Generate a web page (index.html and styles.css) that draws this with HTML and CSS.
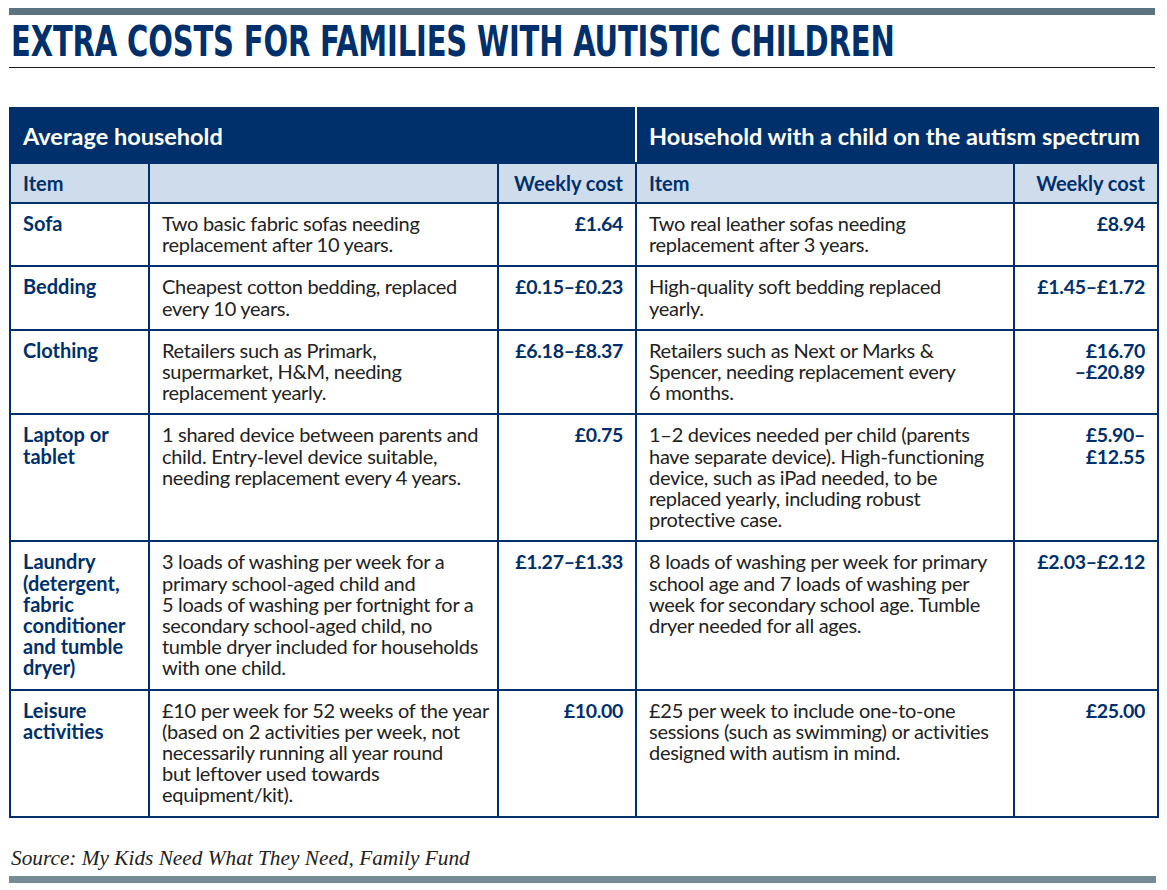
FILE: index.html
```html
<!DOCTYPE html>
<html lang="en">
<head>
<meta charset="utf-8">
<title>Extra costs for families with autistic children</title>
<link rel="stylesheet" href="styles.css">
</head>
<body>
<div class="page">
  <div class="topbar"></div>
  <h1 class="title"><span class="title-text">EXTRA COSTS FOR FAMILIES WITH AUTISTIC CHILDREN</span></h1>
  <div class="rule"></div>
  <table class="costs">
    <colgroup>
      <col class="c-item">
      <col class="c-desc1">
      <col class="c-cost">
      <col class="c-desc2">
      <col class="c-cost2">
    </colgroup>
    <thead>
      <tr class="group">
        <th colspan="3" class="group-left">Average household</th>
        <th colspan="2" class="group-right">Household with a child on the autism spectrum</th>
      </tr>
      <tr class="sub">
        <th>Item</th>
        <th></th>
        <th class="num">Weekly cost</th>
        <th>Item</th>
        <th class="num">Weekly cost</th>
      </tr>
    </thead>
    <tbody>
      <tr>
        <td class="item">Sofa</td>
        <td class="desc">Two basic fabric sofas needing<br>replacement after 10 years.</td>
        <td class="cost">£1.64</td>
        <td class="desc">Two real leather sofas needing<br>replacement after 3 years.</td>
        <td class="cost">£8.94</td>
      </tr>
      <tr>
        <td class="item">Bedding</td>
        <td class="desc">Cheapest cotton bedding, replaced<br>every 10 years.</td>
        <td class="cost">£0.15–£0.23</td>
        <td class="desc">High-quality soft bedding replaced<br>yearly.</td>
        <td class="cost">£1.45–£1.72</td>
      </tr>
      <tr>
        <td class="item">Clothing</td>
        <td class="desc">Retailers such as Primark,<br>supermarket, H&amp;M, needing<br>replacement yearly.</td>
        <td class="cost">£6.18–£8.37</td>
        <td class="desc">Retailers such as Next or Marks &amp;<br>Spencer, needing replacement every<br>6 months.</td>
        <td class="cost">£16.70<br>–£20.89</td>
      </tr>
      <tr>
        <td class="item">Laptop or<br>tablet</td>
        <td class="desc">1 shared device between parents and<br>child. Entry-level device suitable,<br>needing replacement every 4 years.</td>
        <td class="cost">£0.75</td>
        <td class="desc">1–2 devices needed per child (parents<br>have separate device). High-functioning<br>device, such as iPad needed, to be<br>replaced yearly, including robust<br>protective case.</td>
        <td class="cost">£5.90–<br>£12.55</td>
      </tr>
      <tr>
        <td class="item">Laundry<br>(detergent,<br>fabric<br>conditioner<br>and tumble<br>dryer)</td>
        <td class="desc">3 loads of washing per week for a<br>primary school-aged child and<br>5 loads of washing per fortnight for a<br>secondary school-aged child, no<br>tumble dryer included for households<br>with one child.</td>
        <td class="cost">£1.27–£1.33</td>
        <td class="desc">8 loads of washing per week for primary<br>school age and 7 loads of washing per<br>week for secondary school age. Tumble<br>dryer needed for all ages.</td>
        <td class="cost">£2.03–£2.12</td>
      </tr>
      <tr class="last">
        <td class="item">Leisure<br>activities</td>
        <td class="desc">£10 per week for 52 weeks of the year<br>(based on 2 activities per week, not<br>necessarily running all year round<br>but leftover used towards<br>equipment/kit).</td>
        <td class="cost">£10.00</td>
        <td class="desc">£25 per week to include one-to-one<br>sessions (such as swimming) or activities<br>designed with autism in mind.</td>
        <td class="cost">£25.00</td>
      </tr>
    </tbody>
  </table>
  <p class="source">Source: My Kids Need What They Need, Family Fund</p>
  <div class="bottombar"></div>
</div>
</body>
</html>
```

FILE: styles.css
```css
html, body {
  margin: 0;
  padding: 0;
  background: #ffffff;
}

.page {
  padding: 8px 0 0 9px;
  width: 1148px;
}

.topbar {
  height: 7px;
  width: 1146px;
  background: #5b7381;
}

.title {
  margin: 6px 0 0 0;
  height: 40px;
  line-height: 40px;
  font-family: "DejaVu Sans Condensed", "DejaVu Sans", sans-serif;
  font-weight: bold;
  font-size: 43px;
  color: #00306b;
  white-space: nowrap;
  overflow: visible;
}

.title-text {
  display: inline-block;
  transform: scaleX(0.75);
  transform-origin: 0 50%;
  letter-spacing: -0.2px;
  margin-left: 2px;
}

.rule {
  margin-top: 6px;
  width: 1146px;
  height: 1px;
  background: #1a1a1a;
}

.costs {
  margin-top: 39px;
  width: 1148px;
  table-layout: fixed;
  border-collapse: collapse;
  border: 2px solid #00306b;
  font-family: Lato, "Liberation Sans", sans-serif;
  color: #222222;
}

.c-item { width: 139px; }
.c-desc1 { width: 349px; }
.c-cost { width: 138px; }
.c-desc2 { width: 378px; }
.c-cost2 { width: 144px; }

.costs th,
.costs td {
  border: 2px solid #00306b;
  text-align: left;
}

.group th {
  background: #00306b;
  color: #ffffff;
  font-size: 23.5px;
  font-weight: bold;
  height: 53px;
  padding: 0 12px;
  vertical-align: middle;
  white-space: nowrap;
}

.group .group-left {
  border-right: 2px solid #ffffff;
}

.sub th {
  background: #cfdcec;
  color: #00306b;
  font-size: 20px;
  font-weight: bold;
  height: 38px;
  padding: 0 12px;
  vertical-align: middle;
  white-space: nowrap;
}

.sub th.num {
  text-align: right;
}

.costs td {
  vertical-align: top;
  padding: 9px 12px 10px 12px;
  font-size: 20px;
  line-height: 21.2px;
}

.costs td.item {
  color: #00306b;
  font-weight: bold;
}

.costs td.desc {
  color: #222222;
  white-space: nowrap;
  letter-spacing: -0.3px;
}

.costs td.cost {
  color: #00306b;
  font-weight: bold;
  text-align: right;
  white-space: nowrap;
  padding-left: 4px;
  font-size: 19.5px;
  letter-spacing: -0.3px;
}

.costs tr.last td {
  padding-bottom: 10px;
}

.source {
  margin: 28px 0 0 2px;
  font-family: "Liberation Serif", serif;
  font-style: italic;
  font-size: 21.3px;
  line-height: 24px;
  color: #222222;
}

.bottombar {
  margin-top: 6px;
  width: 1147px;
  height: 7px;
  background: #778b97;
}
```
